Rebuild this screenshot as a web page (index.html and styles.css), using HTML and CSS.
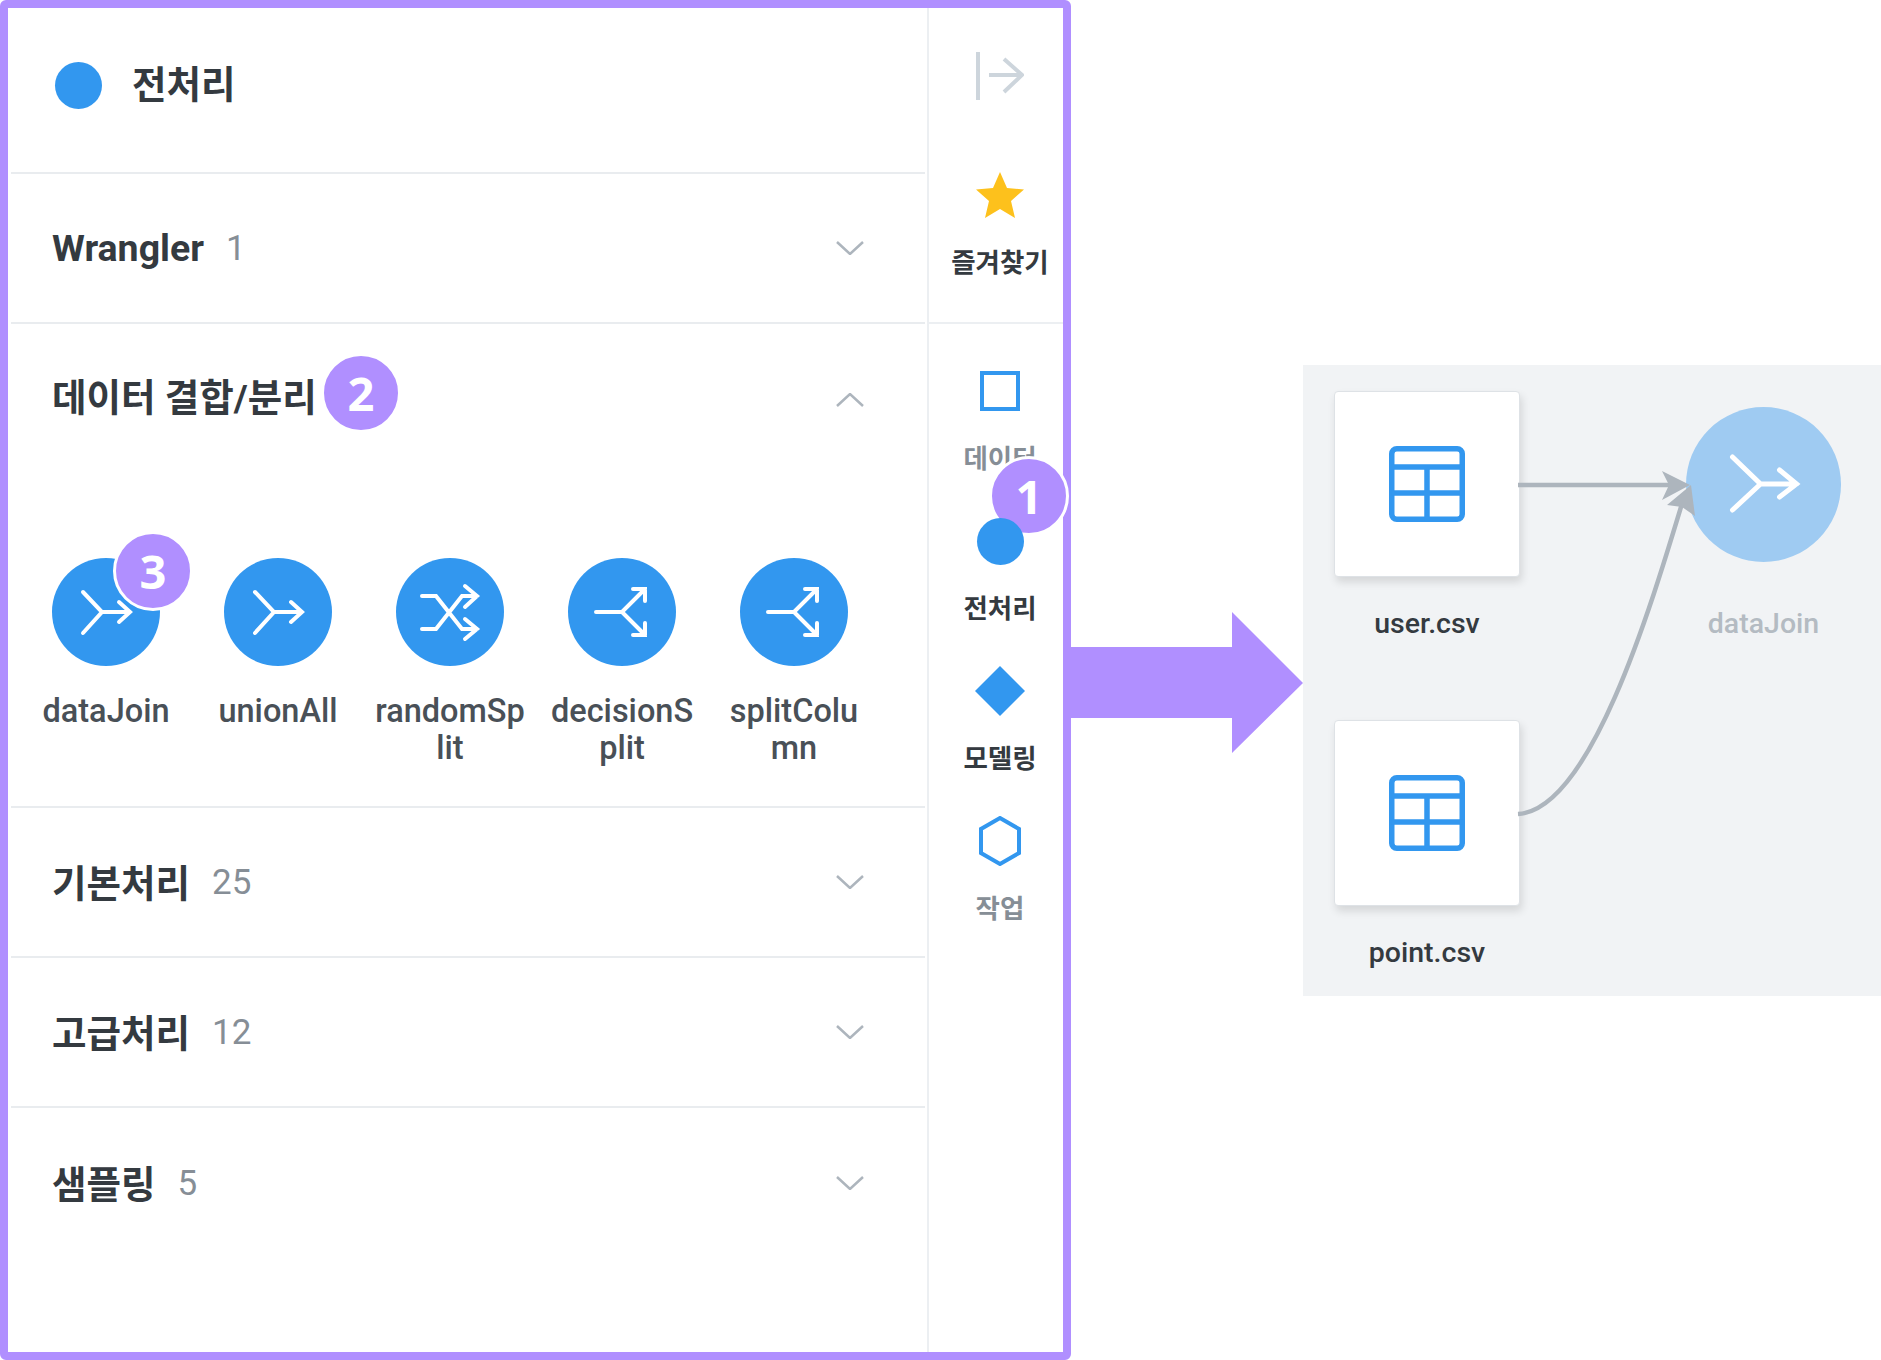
FILE: index.html
```html
<!DOCTYPE html>
<html lang="ko">
<head>
    <meta charset="utf-8">
    <title>전처리</title>
    <link rel="stylesheet" href="styles.css">
</head>
<body>
    <div class="frame">
        <div class="panel">
            <div class="panel-head">
                <span class="dot"></span>
                <span class="title title-top">전처리</span>
            </div>

            <div class="row">
                <span class="title">Wrangler</span>
                <span class="count">1</span>
                <svg class="chevron" viewBox="0 0 28 14"><path d="M1 1 L14 13 L27 1"/></svg>
            </div>

            <div class="section">
                <div class="section-head">
                    <span class="title title-ko">데이터 결합/분리</span>
                    <span class="badge badge-two">2</span>
                    <svg class="chevron chevron-open" viewBox="0 0 28 14"><path d="M1 13 L14 1 L27 13"/></svg>
                </div>
                <div class="tiles">
                    <div class="tile">
                        <svg class="tile-icon" viewBox="0 0 108 108"><circle class="disc" cx="54" cy="54" r="54"/><path class="glyph" d="M31 34 L50 54 L31 75 M50 54 H78 M67 44 L78 54 L67 64"/></svg>
                        <span class="tile-name">dataJoin</span>
                        <span class="badge badge-three">3</span>
                    </div>
                    <div class="tile">
                        <svg class="tile-icon" viewBox="0 0 108 108"><circle class="disc" cx="54" cy="54" r="54"/><path class="glyph" d="M31 34 L50 54 L31 75 M50 54 H78 M67 44 L78 54 L67 64"/></svg>
                        <span class="tile-name">unionAll</span>
                    </div>
                    <div class="tile">
                        <svg class="tile-icon" viewBox="0 0 108 108"><circle class="disc" cx="54" cy="54" r="54"/><path class="glyph" d="M26 38 H40 L66 71 H81 M26 71 H40 L66 38 H81 M69 28 L81 38 L69 49 M69 61 L81 71 L69 81"/></svg>
                        <span class="tile-name">randomSplit</span>
                    </div>
                    <div class="tile">
                        <svg class="tile-icon" viewBox="0 0 108 108"><circle class="disc" cx="54" cy="54" r="54"/><path class="glyph" d="M28 54 H54 L77 31 M54 54 L77 77 M65 31 H77 V43 M65 77 H77 V65"/></svg>
                        <span class="tile-name">decisionSplit</span>
                    </div>
                    <div class="tile">
                        <svg class="tile-icon" viewBox="0 0 108 108"><circle class="disc" cx="54" cy="54" r="54"/><path class="glyph" d="M28 54 H54 L77 31 M54 54 L77 77 M65 31 H77 V43 M65 77 H77 V65"/></svg>
                        <span class="tile-name">splitColumn</span>
                    </div>
                </div>
            </div>

            <div class="row">
                <span class="title title-ko">기본처리</span>
                <span class="count">25</span>
                <svg class="chevron" viewBox="0 0 28 14"><path d="M1 1 L14 13 L27 1"/></svg>
            </div>
            <div class="row">
                <span class="title title-ko">고급처리</span>
                <span class="count">12</span>
                <svg class="chevron" viewBox="0 0 28 14"><path d="M1 1 L14 13 L27 1"/></svg>
            </div>
            <div class="row row-last">
                <span class="title title-ko">샘플링</span>
                <span class="count">5</span>
                <svg class="chevron" viewBox="0 0 28 14"><path d="M1 1 L14 13 L27 1"/></svg>
            </div>
        </div>

        <div class="rail">
            <div class="rail-top">
                <svg class="collapse" viewBox="0 0 48 48"><path d="M2 0 V48 M13 23 H46 M28 7 L46 23 L28 40"/></svg>
                <svg class="star" viewBox="0 0 50 48"><path d="M25 1 L32 17 L49 18.500 L36 30 L40 47 L25 38 L10 47 L14 30 L1 18.500 L18 17 Z"/></svg>
                <span class="rail-label">즐겨찾기</span>
            </div>
            <div class="rail-item">
                <div class="rail-icon"><span class="shape-square"></span></div>
                <span class="rail-label rail-label-off">데이터</span>
                <span class="badge badge-one">1</span>
            </div>
            <div class="rail-item">
                <div class="rail-icon"><span class="shape-circle"></span></div>
                <span class="rail-label">전처리</span>
            </div>
            <div class="rail-item">
                <div class="rail-icon"><svg class="shape-svg" viewBox="0 0 50 50"><path class="fill" d="M25 0 L50 25 L25 50 L0 25 Z"/></svg></div>
                <span class="rail-label">모델링</span>
            </div>
            <div class="rail-item">
                <div class="rail-icon"><svg class="shape-svg" viewBox="0 0 50 50"><path class="line" d="M25 2 L44 13 V37 L25 48 L6 37 V13 Z"/></svg></div>
                <span class="rail-label rail-label-off">작업</span>
            </div>
        </div>
    </div>

    <svg class="big-arrow" viewBox="0 0 232 141"><path d="M0 35 H161 V0 L232 71 L161 141 V106 H0 Z"/></svg>

    <div class="canvas">
        <svg class="links" viewBox="1303 365 578 631">
            <path class="link" d="M1518 485 H1678"/>
            <path class="link" d="M1518 814 C1590 810 1650 610 1684 497"/>
            <path class="head" d="M1690 485 L1662 471 L1669 485 L1662 500 Z"/>
            <path class="head" d="M1691 485 L1667 505 L1682 507 L1695 516 Z"/>
        </svg>

        <div class="node node-user">
            <div class="node-box">
                <svg class="table-icon" viewBox="0 0 76 76"><rect x="2.750" y="2.750" width="70.500" height="70.500" rx="5"/><path d="M2.750 21 H73.250 M2.750 47 H73.250 M38 21 V73.250"/></svg>
            </div>
            <span class="node-name">user.csv</span>
        </div>
        <div class="node node-point">
            <div class="node-box">
                <svg class="table-icon" viewBox="0 0 76 76"><rect x="2.750" y="2.750" width="70.500" height="70.500" rx="5"/><path d="M2.750 21 H73.250 M2.750 47 H73.250 M38 21 V73.250"/></svg>
            </div>
            <span class="node-name">point.csv</span>
        </div>
        <div class="node node-join">
            <svg class="join-icon" viewBox="0 0 155 155"><circle class="disc-faded" cx="77.500" cy="77.500" r="77.500"/><path class="glyph-large" d="M46.500 50 L74.500 77 L46.500 103 M74.500 77 H110.500 M93.500 63 L110.500 77 L93.500 90"/></svg>
            <span class="node-name node-name-off">dataJoin</span>
        </div>
    </div>
</body>
</html>
```

FILE: styles.css
```css
html,
body {
    margin: 0;
    height: 100%;
}

body {
    display: flex;
    align-items: flex-start;
    width: 1881px;
    height: 1360px;
    background-color: white;
    overflow: hidden;
    font-family: Roboto, "Noto Sans CJK KR", sans-serif;
}

.frame {
    display: flex;
    box-sizing: border-box;
    flex: none;
    width: 1071px;
    height: 1360px;
    border: 8px solid #b08fff;
    border-radius: 6px;
}

/* left list */
.panel {
    box-sizing: border-box;
    flex: none;
    width: 919px;
    padding: 0 2px 0 3px;
}

.panel-head {
    display: flex;
    align-items: center;
    gap: 30px;
    box-sizing: border-box;
    height: 166px;
    padding: 0 0 10px 44px;
    border-bottom: 2px solid #e9ecef;
}

.dot {
    width: 47px;
    height: 47px;
    border-radius: 50%;
    background-color: #3297ef;
}

.title {
    font-size: 37.500px;
    font-weight: 700;
    color: #343a40;
    white-space: nowrap;
}

/* hangul sits low in the line box */
.title-ko {
    margin-bottom: 4px;
}

.title-top {
    margin-bottom: 7px;
}

.count {
    margin-left: 22px;
    font-size: 35px;
    color: #868e96;
}

.row {
    display: flex;
    align-items: center;
    box-sizing: border-box;
    height: 150px;
    padding: 0 61px 0 41px;
    border-bottom: 2px solid #e9ecef;
}

.row-last {
    border-bottom: none;
}

.chevron {
    flex: none;
    width: 28px;
    height: 14px;
    margin-left: auto;
    fill: none;
    stroke: #adb5bd;
    stroke-width: 2.500;
}

.chevron-open {
    margin-top: 6px;
}

.section {
    box-sizing: border-box;
    height: 484px;
    border-bottom: 2px solid #e9ecef;
}

.section-head {
    position: relative;
    display: flex;
    align-items: center;
    box-sizing: border-box;
    height: 149px;
    padding: 0 61px 4px 41px;
}

.tiles {
    display: flex;
    gap: 22px;
    padding: 85px 0 0 20px;
}

.tile {
    position: relative;
    display: flex;
    flex-direction: column;
    align-items: center;
    width: 150px;
}

.tile-icon {
    width: 108px;
    height: 108px;
    margin-bottom: 27px;
}

.tile-name {
    width: 100%;
    font-size: 32.500px;
    font-weight: 500;
    line-height: 37px;
    color: #495057;
    text-align: center;
    word-break: break-all;
}

.disc {
    fill: #3297ef;
}

.disc-faded {
    fill: #9fcbf2;
}

.glyph {
    fill: none;
    stroke: white;
    stroke-width: 4;
    stroke-linecap: round;
}

.glyph-large {
    fill: none;
    stroke: white;
    stroke-width: 5;
    stroke-linecap: round;
}

/* numbered callouts */
.badge {
    position: absolute;
    box-sizing: border-box;
    display: flex;
    align-items: center;
    justify-content: center;
    width: 80px;
    height: 80px;
    border: 3px solid white;
    border-radius: 50%;
    background-color: #b08fff;
    font-family: "Open Sans", sans-serif;
    font-size: 47px;
    font-weight: 700;
    color: white;
}

.badge-one {
    left: 60px;
    top: 132px;
}

.badge-two {
    left: 310px;
    top: 29px;
}

.badge-three {
    left: 82px;
    top: -27px;
}

/* right rail */
.rail {
    flex: none;
    width: 136px;
    box-sizing: border-box;
    border-left: 2px solid #eceff2;
}

.rail-top {
    display: flex;
    flex-direction: column;
    align-items: center;
    box-sizing: border-box;
    height: 316px;
    padding: 44px 0 0 8px;
    border-bottom: 2px solid #eceff2;
}

.collapse {
    width: 48px;
    height: 48px;
    fill: none;
    stroke: #cdd5dc;
    stroke-width: 4;
}

.star {
    width: 50px;
    height: 48px;
    margin: 71px 0 29px;
    fill: #fdc11c;
}

.rail-item {
    position: relative;
    display: flex;
    flex-direction: column;
    align-items: center;
    box-sizing: border-box;
    height: 150px;
    padding: 42px 0 0 8px;
}

.rail-icon {
    display: flex;
    align-items: center;
    justify-content: center;
    width: 50px;
    height: 50px;
    margin-bottom: 28px;
}

.rail-label {
    font-size: 26.500px;
    font-weight: 700;
    line-height: 30px;
    color: #343a40;
    white-space: nowrap;
}

.rail-label-off {
    color: #868e96;
}

.shape-square {
    box-sizing: border-box;
    width: 40px;
    height: 40px;
    border: 4px solid #3297ef;
}

.shape-circle {
    width: 47px;
    height: 47px;
    border-radius: 50%;
    background-color: #3297ef;
}

.shape-svg {
    width: 50px;
    height: 50px;
}

.shape-svg .fill {
    fill: #3297ef;
}

.shape-svg .line {
    fill: none;
    stroke: #3297ef;
    stroke-width: 4;
}

/* arrow between the panel and the canvas */
.big-arrow {
    flex: none;
    width: 232px;
    height: 141px;
    margin-top: 612px;
    fill: #b08fff;
}

/* flow canvas */
.canvas {
    position: relative;
    flex: none;
    width: 578px;
    height: 631px;
    margin-top: 365px;
    background-color: #f1f3f5;
}

.links {
    position: absolute;
    left: 0;
    top: 0;
    z-index: 1;
    width: 578px;
    height: 631px;
}

.link {
    fill: none;
    stroke: #adb5bd;
    stroke-width: 4.500;
}

.head {
    fill: #adb5bd;
}

.node {
    position: absolute;
    display: flex;
    flex-direction: column;
    align-items: center;
}

.node-user {
    left: 31px;
    top: 26px;
}

.node-point {
    left: 31px;
    top: 355px;
}

.node-join {
    left: 383px;
    top: 42px;
}

.node-box {
    display: flex;
    align-items: center;
    justify-content: center;
    box-sizing: border-box;
    width: 186px;
    height: 186px;
    margin-bottom: 30px;
    border: 1px solid #dee2e6;
    border-radius: 4px;
    background-color: white;
    box-shadow: 2px 5px 8px rgba(0, 0, 0, .12);
}

.table-icon {
    width: 76px;
    height: 76px;
    fill: none;
    stroke: #3297ef;
    stroke-width: 5.500;
}

.join-icon {
    width: 155px;
    height: 155px;
    margin-bottom: 45px;
}

.node-name {
    font-size: 28.500px;
    font-weight: 500;
    line-height: 34px;
    color: #343a40;
}

.node-name-off {
    color: #b4bbc2;
}
```
